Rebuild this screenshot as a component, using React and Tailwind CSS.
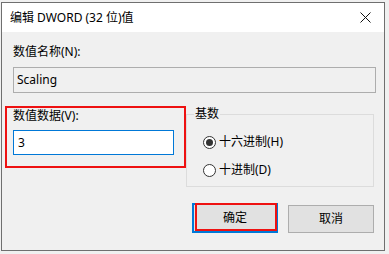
export default function App() {
  return (
    <div className="w-[389px] h-[254px] bg-[#f0f0f0] pt-[2px] pl-[1px] font-['Noto_Sans','Noto_Sans_CJK_SC',sans-serif] text-[12px] text-black">
      <div className="relative w-[384px] h-[249px] border border-[#6f6f6f] flex flex-col">
        {/* title bar */}
        <div className="h-[29px] bg-white flex items-center justify-between pl-[8px] pr-[13px]">
          <span className="leading-[16px]">编辑 DWORD (32 位)值</span>
          <svg width="11" height="11" viewBox="0 0 11 11">
            <path d="M0.5 0.5 L10.5 10.5 M10.5 0.5 L0.5 10.5" stroke="#111" strokeWidth="1" />
          </svg>
        </div>

        <div className="flex-1 bg-[#f0f0f0] pt-[12px] pl-[11px] pr-[8px]">
          <div className="leading-[16px]">数值名称(N):</div>
          <div className="mt-[7px] h-[26px] border border-[#adadad] bg-[#f0f0f0] flex items-center pl-[3px] leading-[16px]">
            Scaling
          </div>

          <div className="mt-[15px] flex">
            <div className="w-[161px]">
              <div className="leading-[16px]">数值数据(V):</div>
              <div className="mt-[6px] h-[25px] border border-[#0078d7] bg-white flex items-center pl-[4px] leading-[16px]">
                3
              </div>
            </div>
            <div className="relative ml-[12px] mt-[6px] w-[188px] h-[73px] border border-[#dcdcdc]">
              <span className="absolute -top-[9px] left-[7px] bg-[#f0f0f0] px-[1px] leading-[16px]">基数</span>
              <div className="pt-[20px] pl-[16px] flex flex-col gap-[14px]">
                <label className="flex items-center gap-[3px] leading-[14px]">
                  <span className="w-[13px] h-[13px] rounded-full border border-[#333] bg-white flex items-center justify-center">
                    <span className="w-[7px] h-[7px] rounded-full bg-[#333]" />
                  </span>
                  十六进制(H)
                </label>
                <label className="flex items-center gap-[3px] leading-[14px]">
                  <span className="w-[13px] h-[13px] rounded-full border border-[#333] bg-white" />
                  十进制(D)
                </label>
              </div>
            </div>
          </div>

          <div className="mt-[16px] flex justify-end items-end gap-[10px] pr-[2px]">
            <button className="w-[86px] h-[30px] border-2 border-[#0078d7] bg-[#e1e1e1] leading-[16px]">确定</button>
            <button className="w-[86px] h-[28px] border border-[#adadad] bg-[#e1e1e1] leading-[16px]">取消</button>
          </div>
        </div>

        {/* annotation boxes */}
        <div className="absolute left-[3px] top-[103px] w-[181px] h-[62px] border-2 border-[#ee1111] pointer-events-none" />
        <div className="absolute left-[193px] top-[200px] w-[82px] h-[28px] border-2 border-[#ee1111] pointer-events-none" />
      </div>
    </div>
  );
}
